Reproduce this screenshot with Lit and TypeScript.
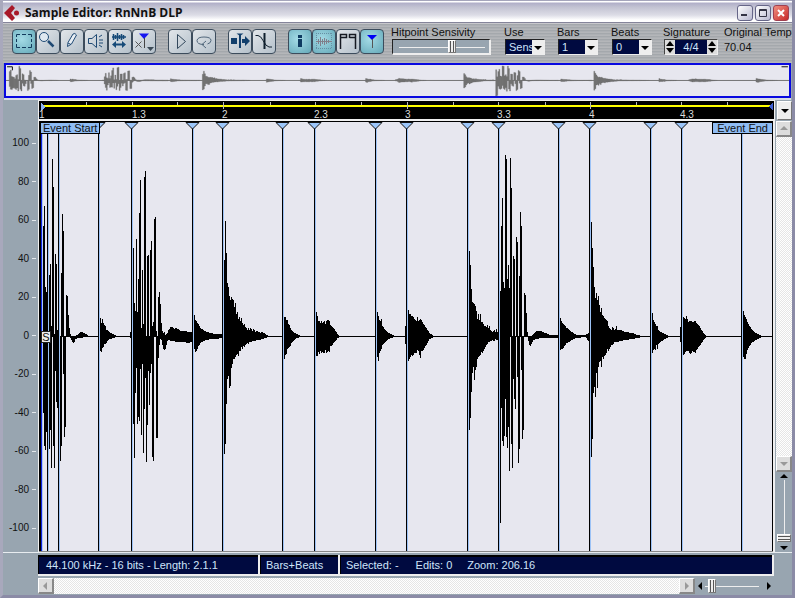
import { LitElement, html, svg, css } from "lit";
import { customElement } from "lit/decorators.js";

// Peaks of the sample: x, height above the zero line, depth below it.
// Each string is one hit; points further apart than one column are interpolated.
const HITS = [
  "43 110 76,44 130 109,45 49 113,46 44 95,47 40 90,48 20 100,49 61 112,50 72 93,51 10 131,52 177 0,53 149 109,54 2 131,55 82 34,56 72 65,57 6 71,58 0 40,59 0 0,60 0 124,61 63 109,62 122 0,63 105 37,64 0 100,65 0 90,66 41 0,67 40 0,68 21 0,69 8 0,70 2 1,71 0 3,72 0 5,73 0 6,74 0 5,75 0 2,77 1 1,80 4 1,84 3 0,88 0 0",
  "100 18 14,101 13 15,102 17 11,103 13 10,104 11 7,105 10 7,106 6 6,107 6 4,108 5 3,109 4 2,110 3 2,112 2 1,116 0 0",
  "130 4 1,131 4 1,133 88 87,134 33 121,135 25 56,136 97 31,137 24 87,138 57 80,139 123 84,140 156 32,141 8 98,142 66 27,143 12 116,144 159 72,145 165 41,146 0 125,147 80 88,148 81 34,149 0 68,150 86 36,151 95 27,152 10 120,153 14 124,154 117 0,155 119 0,156 5 101,157 0 101,158 39 21,159 44 8,160 32 2,161 13 3,162 5 8,163 3 12,164 4 13,165 1 12,166 2 8,167 3 4,168 6 3,169 7 3,170 9 4,172 9 4,174 7 4,176 8 5,180 5 5,184 5 5,188 4 6,191 4 5",
  "194 21 12,195 16 15,196 15 14,197 13 12,198 12 9,199 10 8,200 8 6,203 6 4,206 4 3,210 3 2,215 2 2,221 2 1",
  "224 76 117,225 115 107,226 83 67,227 53 42,228 49 39,229 40 51,230 36 49,231 39 31,232 37 27,233 36 22,234 29 22,235 33 20,236 22 18,237 24 17,238 17 19,239 19 14,240 15 14,241 18 10,242 13 12,243 11 9,244 12 10,245 9 8,246 8 7,247 6 6,248 8 7,249 6 5,250 8 5,252 5 4,253 7 4,255 4 4,256 5 3,260 3 3,261 4 2,265 2 1,268 0 0",
  "284 19 22,285 19 18,286 16 17,287 16 12,288 12 11,289 11 10,290 8 9,291 6 6,292 5 5,293 4 4,294 3 3,296 2 1,301 0 0",
  "316 24 19,317 20 19,318 15 15,319 15 17,320 13 14,321 15 16,322 13 15,323 14 16,324 15 16,325 12 13,326 15 16,328 16 14,329 15 15,330 11 9,332 9 8,333 8 6,335 5 4,337 2 1,339 0 0",
  "377 24 20,378 20 24,379 16 16,380 15 14,381 17 12,382 10 8,384 7 6,387 4 3,390 2 1,394 0 0",
  "405 10 7,406 10 7,408 26 24,409 22 22,410 22 20,411 20 18,412 20 19,414 17 16,416 15 16,417 19 13,418 15 14,420 17 21,421 16 14,423 12 13,425 9 9,427 6 6,429 3 2,433 0 0",
  "469 85 93,470 71 81,471 47 55,472 34 36,473 33 30,474 32 43,475 30 33,476 25 30,477 17 22,478 22 20,479 16 19,480 22 18,481 14 15,482 14 16,484 10 12,486 9 8,487 11 7,488 8 5,489 10 5,490 6 4,492 4 3,494 6 4,495 4 2,496 7 3,497 4 3",
  "499 134 192,500 45 186,501 110 71,502 138 104,503 54 109,504 48 99,505 181 62,506 177 100,507 57 111,508 71 90,509 48 134,510 178 0,511 148 107,512 0 131,513 80 42,514 77 62,515 0 72,516 99 0,517 94 40,518 0 126,519 60 112,520 124 0,521 110 33,522 0 102,523 0 93,524 43 0,525 41 0,526 23 0,527 4 0,528 0 4,529 0 8,530 0 9,531 0 7,533 2 3,536 5 2,540 5 1,545 3 1,550 1 1,557 1 1",
  "560 18 13,561 15 12,562 13 12,563 12 11,564 11 9,565 10 8,566 8 6,568 7 5,570 5 4,573 3 2,576 1 1,585 1 0,588 3 4",
  "591 114 120,592 88 102,593 69 56,594 49 50,595 38 60,596 43 36,597 36 51,598 40 30,599 31 25,600 24 24,601 28 30,602 21 20,603 20 22,604 18 19,606 16 16,607 15 12,608 10 14,609 8 12,611 6 8,612 9 8,614 6 5,615 7 5,616 10 5,617 6 5,620 6 4,625 4 3,632 3 2,636 1 1,642 0 0",
  "652 23 16,653 16 13,654 14 12,655 12 13,656 10 8,657 10 12,658 6 7,660 4 5,663 3 3,668 0 0",
  "680 9 5,683 19 18,685 17 15,686 20 14,688 14 14,690 15 17,692 14 14,695 15 16,696 13 13,698 11 10,700 8 8,703 3 3,706 0 0",
  "743 25 20,744 21 22,745 19 22,746 17 17,747 14 13,749 10 9,751 7 6,754 4 4,757 2 2,762 0 0",
];
const ZERO = 336;

function wavePath(): string {
  let d = "";
  for (const hit of HITS) {
    const pts = hit.split(",").map((p) => p.split(" ").map(Number));
    pts.forEach(([x, u, v], i) => {
      const [nx, nu, nv] = pts[i + 1] ?? [x + 1, u, v];
      for (let c = x; c < nx; c++) {
        const t = (c - x) / (nx - x);
        const up = Math.round(u + (nu - u) * t);
        const down = Math.round(v + (nv - v) * t);
        d += `M${c} ${ZERO - up}H${c + 1}V${ZERO + 1 + down}H${c}Z`;
      }
    });
  }
  return d;
}
const WAVE = wavePath();

const HITPOINTS = [47, 58, 98, 131, 192, 222, 282, 314, 375, 406, 467, 498, 558, 589, 650, 681, 741];
const TICKS = [86, 132, 177, 223, 270, 315, 361, 407, 453, 498, 545, 590, 636, 681, 727];
const BEATS: [number, string][] = [
  [39, "1"], [132, "1.3"], [222, "2"], [314, "2.3"], [405, "3"], [497, "3.3"], [589, "4"], [680, "4.3"],
];
const LEVELS = [100, 80, 60, 40, 20, 0, -20, -40, -60, -80, -100];

const ICONS = {
  select: svg`<path d="M4.500 8V5.500H8M10 5.500H14M16 5.500H19.500V8M19.500 10V13M19.500 15V18.500H16M14 18.500H10M8 18.500H4.500V15M4.500 13V10" fill="none" stroke="#123a5c"/>`,
  zoom: svg`<circle cx="8" cy="8" r="4.500" fill="#dfe8f0" stroke="#1f4a74"/><path d="M12 12L17.500 17.500" stroke="#1f4a74" stroke-width="2.500"/>`,
  draw: svg`<path d="M7.500 17.500L8 13.500L13 5Q15 3.500 16.500 6L11.500 15Z" fill="#e8eef4" stroke="#1f4a74"/><path d="M8 14L11 15.500" stroke="#1f4a74"/>`,
  play: svg`<path d="M4.500 9.500H8L12.500 5.500V18.500L8 14.500H4.500Z" fill="none" stroke="#1f4a74"/><path d="M15 8L18 6M15 11H19M15 14H19M15 16L18 18" stroke="#1f4a74"/>`,
  scrub: svg`<path d="M4 8H18M5.500 5V11M7.500 6V10M9.500 4V12M11.500 6V10M13.500 5V11M15.500 6V10" stroke="#164a78" stroke-width="1.500"/><path d="M4 15.500L8 12V14.500H14V12L18 15.500L14 19V16.500H8V19Z" fill="#164a78"/>`,
  hitpoint: svg`<path d="M7 4.500H17L12 10Z" fill="#1616f0"/><path d="M12.500 9V19" stroke="#444"/><path d="M3.500 12.500L9.500 18.500M9.500 12.500L3.500 18.500" stroke="#555"/><path d="M15 18H22L18.500 22Z" fill="#3c4a56"/>`,
  start: svg`<path d="M9.500 5.500L17.500 12.500L9.500 19.500Z" fill="none" stroke="#33485c"/>`,
  loop: svg`<path d="M12 15.500Q5 15.500 5 11.500Q5.500 8 12 8Q19 8 19 11.500Q19 14 15.500 15" fill="none" stroke="#51677b"/><path d="M14 12L10 15.500L14 19" fill="none" stroke="#51677b"/>`,
  autoscroll: svg`<path d="M3 9H9V15H3ZM11 5H13V19H11ZM14 10H17V7L22 12L17 17V14H14Z" fill="#123f6c"/><path d="M8.500 4.500H15.500L12 7Z" fill="#123f6c"/>`,
  zero: svg`<path d="M12.500 4V20" stroke="#10202e" stroke-width="2"/><path d="M3.500 6.500H6Q9 7 11 11.500Q14 17.500 17 18H20" fill="none" stroke="#10202e"/>`,
  info: svg`<path d="M10 6H14V9H10ZM10 10H14V18H10Z" fill="#0e3a60"/>`,
  audio: svg`<path d="M4 4.500H20M4 19.500H20M4.500 4V20M19.500 4V20" stroke="#6590a4" stroke-dasharray="1 1" fill="none"/><path d="M4 12.500H20M6.500 10V15M8.500 8V17M10.500 10V15M12.500 9V16M14.500 10V15M16.500 11V14" stroke="#80808c"/>`,
  event: svg`<path d="M4.500 20V5.500H10.500V8.500H5M13.500 9V5.500H19.500V20M13.500 8.500H19" fill="none" stroke="#161a22" stroke-width="1.500"/>`,
  hitmode: svg`<path d="M7 6H17L12 11Z" fill="#0000f4"/><path d="M12.500 10V19" stroke="#555"/>`,
};

@customElement("app-root")
export class SampleEditor extends LitElement {
  static styles = css`
    * { box-sizing: border-box; }
    :host {
      box-sizing: border-box;
      display: flex;
      flex-direction: column;
      height: 100vh;
      min-height: 360px;
      overflow: hidden;
      font: 11px/13px "Liberation Sans", Arial, sans-serif;
      color: #111;
      background: #98a5b0;
      border: solid #8b8ba6;
      border-width: 0 3px 3px 3px;
      border-left-color: #a8a8bc;
    }
    button, select, input { font: inherit; margin: 0; padding: 0; border-radius: 0; }
    svg { display: block; }

    .title {
      flex: none;
      display: flex;
      align-items: center;
      height: 23px;
      padding-right: 1px;
      border-bottom: 1px solid #85859a;
      background: linear-gradient(#a5a5bb 0 1px, #fff 1px 2px, #b0aec8 3px, #c2c2d2 7px, #dcdce6 15px, #fff 20px);
    }
    .title h1 {
      flex: 1;
      margin: 3px 0 0 2px;
      font: bold 12px/18px "Open Sans", "Noto Sans", sans-serif;
      white-space: nowrap;
    }
    .logo { margin-top: 1px; }
    .win {
      width: 16px;
      height: 16px;
      margin: 3px 2px 0 0;
      border: 1px solid #666688;
      border-radius: 3px;
      background: linear-gradient(135deg, #fff, #b8b8d0);
    }
    .win.close { background: linear-gradient(135deg, #f09080, #c82828); border-color: #a04050; }

    .tools {
      flex: none;
      display: flex;
      height: 40px;
      padding-left: 9px;
      overflow: hidden;
      background: repeating-linear-gradient(#a4a8ac 0 1px, #adb0b4 1px 2px, #b4b6b9 2px 3px);
      border-top: 1px solid #c8c8cc;
      white-space: nowrap;
    }
    .group { display: flex; margin: 5px 12px 0 0; height: 25px; }
    .tool {
      width: 24px;
      height: 25px;
      border: 1px solid #3c4c5c;
      border-radius: 4px;
      background: linear-gradient(135deg, #e2e6ea, #b4c0ca);
      overflow: hidden;
    }
    .tool svg { margin: -1px; }
    .tool.on { background: radial-gradient(circle at 40% 40%, #a4dbe6, #64a8b8); }
    .field { display: flex; flex-direction: column; margin-top: 2px; flex: none; }
    .field .control { height: 16px; }
    .f-sens { width: 113px; margin-left: -5px; }
    .f-use { width: 53px; }
    .f-bars { width: 54px; }
    .f-beats { width: 52px; }
    .f-sig { width: 61px; }
    .box {
      display: flex;
      width: 40px;
      border: 1px solid #222;
      border-right-color: #eee;
      border-bottom-color: #eee;
      background: #000a40;
      margin-left: 1px;
    }
    .box select {
      appearance: none;
      width: 26px;
      flex: none;
      border: 0;
      padding-left: 3px;
      background: transparent;
      color: #cfe4fa;
    }
    .box .drop { flex: 1; background: #eee; pointer-events: none; }
    .sig { display: flex; width: 54px; border: 1px solid #444; border-right-color: #eee; border-bottom-color: #eee; margin-left: 1px; }
    .sig input { width: 32px; border: 0; background: #000a40; color: #cfe4fa; text-align: center; }
    .spin { flex: 1; display: flex; flex-direction: column; background: #ddd; }
    .spin button { flex: 1; border: 0; background: none; height: 7px; }
    .tempo { padding-top: 2px; }

    .slider { appearance: none; background: none; outline: none; }
    .slider::-webkit-slider-thumb {
      appearance: none;
      width: 8px;
      height: 13px;
      border: 1px solid #777;
      border-left-color: #fff;
      border-top-color: #fff;
      background: linear-gradient(90deg, #e8e8e8 1px, #555 1px 2px, #eee 2px 4px, #555 4px 5px, #eee 5px);
    }
    .slider.sens {
      width: 99px;
      margin-left: 1px;
      border: 1px solid #222;
      border-right: 2px solid #eee;
      border-bottom: 2px solid #eee;
      background: linear-gradient(#eee, #eee) 6px 7px / 86px 1px no-repeat #98a5b0;
    }

    .overview {
      flex: none;
      height: 35px;
      border: 2px solid #0808e0;
      margin: 0 1px;
      background: #e7e7ef;
      box-shadow: 0 2px #d8dce2;
    }
    .overview svg { width: 100%; height: 31px; }

    .main {
      flex: 1;
      min-height: 0;
      display: grid;
      grid-template: 21px minmax(0, 1fr) / 35px minmax(0, 1fr) 17px;
      margin-top: 2px;
    }
    .ruler {
      position: relative;
      grid-column: 2;
      border: solid #f0f0f0;
      border-width: 1px 1px 2px 1px;
      background: #000;
    }
    .ruler svg { width: 100%; height: 18px; }
    .beat { position: absolute; top: 8px; font-size: 10px; line-height: 11px; color: #ddd; }
    .menu { margin: 1px 0 1px 2px; border: 1px solid #777; border-top-color: #fff; border-left-color: #fff; background: #eee; }
    .axis {
      grid-column: 1;
      display: flex;
      flex-direction: column;
      justify-content: space-between;
      align-items: flex-end;
      padding: 16px 2px 18px 0;
      font-size: 10px;
      line-height: 12px;
    }
    .level { display: flex; align-items: center; gap: 3px; }
    .level::after { content: ""; width: 4px; height: 1px; background: #e4e8ec; }
    .wave {
      position: relative;
      min-height: 0;
      border: solid #f0f0f0;
      border-width: 0 2px 0 1px;
    }
    .wave svg { width: 100%; height: 100%; background: #e7e7ef; }
    .tag {
      position: absolute;
      top: 1px;
      height: 12px;
      padding: 0 2px;
      border: 1px solid #000;
      background: #8fbcf4;
      line-height: 10px;
    }
    .tag.start { left: 1px; }
    .tag.end { right: 0; padding: 0 4px; }
    .snap {
      position: absolute;
      left: 2px;
      top: calc(50% - 6px);
      width: 10px;
      height: 12px;
      border: 1px solid #222;
      background: #eee;
      line-height: 10px;
      text-align: center;
    }
    .side { display: flex; flex-direction: column; padding-left: 1px; }
    .bar {
      flex: 1;
      display: flex;
      justify-content: space-between;
      background: repeating-conic-gradient(#fff 0 25%, #e6e6e6 0 50%) 0 0 / 2px 2px;
    }
    .bar.v { flex-direction: column; }
    .arrow {
      flex: none;
      width: 16px;
      height: 16px;
      border: 1px solid #fff;
      border-right: 2px solid #888;
      border-bottom: 2px solid #888;
      background: #ddd;
    }
    .arrow svg { margin: -1px; }
    .zoomv { flex: none; display: flex; flex-direction: column; align-items: center; height: 80px; }
    .zoomv .slider {
      writing-mode: vertical-lr;
      width: 14px;
      height: 64px;
      background: linear-gradient(#eee, #eee) 7px 0 / 1px 54px no-repeat;
    }
    .zoomv .slider::-webkit-slider-thumb {
      width: 14px;
      height: 8px;
      background: linear-gradient(#e8e8e8 1px, #555 1px 2px, #eee 2px 4px, #555 4px 5px, #eee 5px);
    }
    .nudge { border: 0; background: none; width: 10px; height: 8px; }

    .status {
      flex: none;
      display: flex;
      height: 25px;
      padding: 2px 18px 1px 35px;
      border-top: 1px solid #e8ecf0;
      color: #cfe4fa;
      white-space: nowrap;
    }
    .cell {
      display: flex;
      gap: 17px;
      padding-left: 6px;
      border: solid #eee;
      border-width: 0 2px 2px 0;
      background: #000a40;
      box-shadow: inset 1px 2px #000;
      line-height: 21px;
    }
    .cell:first-child { width: 222px; padding-left: 8px; }
    .cell:nth-child(2) { width: 80px; }
    .cell:last-child { flex: 1; gap: 15px; }
    .cell:last-child span:first-child { margin-right: 2px; }
    .foot { flex: none; display: flex; height: 18px; padding: 1px 18px 1px 35px; }
    .zoomh { flex: none; width: 79px; display: flex; align-items: center; }
    .zoomh .nudge { width: 10px; height: 10px; }
    .zoomh .slider { width: 58px; height: 16px; background: linear-gradient(#eee, #eee) 0 8px / 54px 1px no-repeat; }
    .zoomh .slider::-webkit-slider-thumb { height: 14px; }
  `;

  private icon(name: keyof typeof ICONS, label: string, on = false) {
    return html`<button class="tool ${on ? "on" : ""}" aria-label=${label} aria-pressed=${on}>
      <svg width="24" height="25" viewBox="0 0 24 25">${ICONS[name]}</svg>
    </button>`;
  }

  private tri(d: string, w: number, h: number, color = "#000") {
    return html`<svg width=${w} height=${h} viewBox="0 0 ${w} ${h}"><path d=${d} fill=${color}></path></svg>`;
  }

  private drop(label: string, value: string, cls: string) {
    return html`<label class="field ${cls}">
      <span>${label}</span>
      <span class="control box">
        <select><option>${value}</option></select>
        <span class="drop">${this.tri("M2 6H10L6 10Z", 12, 14)}</span>
      </span>
    </label>`;
  }

  private spin(name: string) {
    return html`<span class="spin">
      <button aria-label="${name} up">${this.tri("M1 6L5 1L9 6Z", 10, 7)}</button>
      <button aria-label="${name} down">${this.tri("M1 1H9L5 6Z", 10, 7)}</button>
    </span>`;
  }

  render() {
    return html`
      <header class="title">
        <svg class="logo" width="20" height="20" viewBox="0 0 20 20">
          <path d="M9 3L12 6L8 11L12 16L9 19L1 11Z" fill="#a81828"></path>
          <circle cx="13.500" cy="11" r="2.500" fill="#a81828"></circle>
        </svg>
        <h1>Sample Editor: RnNnB DLP</h1>
        <button class="win" aria-label="Minimize">${this.tri("M3 8H9V10H3Z", 14, 14, "#334")}</button>
        <button class="win" aria-label="Maximize">
          <svg width="14" height="14" viewBox="0 0 14 14"><path d="M3.500 3.500H10.500V10.500H3.500ZM3 4.500H11" fill="none" stroke="#334"></path></svg>
        </button>
        <button class="win close" aria-label="Close">
          <svg width="14" height="14" viewBox="0 0 14 14"><path d="M4 4L10 10M10 4L4 10" stroke="#fff" stroke-width="2"></path></svg>
        </button>
      </header>

      <nav class="tools">
        <div class="group">
          ${this.icon("select", "Range selection", true)} ${this.icon("zoom", "Zoom")}
          ${this.icon("draw", "Draw")} ${this.icon("play", "Play")} ${this.icon("scrub", "Scrub")}
          ${this.icon("hitpoint", "Hitpoint edit")}
        </div>
        <div class="group">${this.icon("start", "Audition")} ${this.icon("loop", "Loop")}</div>
        <div class="group">${this.icon("autoscroll", "Autoscroll")} ${this.icon("zero", "Snap to zero crossing")}</div>
        <div class="group">
          ${this.icon("info", "Show info", true)} ${this.icon("audio", "Show audio", true)}
          ${this.icon("event", "Show event")} ${this.icon("hitmode", "Hitpoint mode", true)}
        </div>
        <label class="field f-sens">
          <span>Hitpoint Sensivity</span>
          <input class="control slider sens" type="range" min="0" max="100" value="63" />
        </label>
        ${this.drop("Use", "Sens", "f-use")} ${this.drop("Bars", "1", "f-bars")}
        ${this.drop("Beats", "0", "f-beats")}
        <div class="field f-sig">
          <label for="sig">Signature</label>
          <span class="control sig">
            ${this.spin("Numerator")}<input id="sig" type="text" value="4/4" />${this.spin("Denominator")}
          </span>
        </div>
        <div class="field"><span>Original Tempo</span><span class="tempo">70.04</span></div>
      </nav>

      <section class="overview" aria-label="Overview">
        <svg viewBox="40 144 734 386" preserveAspectRatio="none">
          <path d="M40 336.500H774" stroke="#737373" vector-effect="non-scaling-stroke"></path>
          <path d=${WAVE} fill="#737373" stroke="#737373" stroke-width="0.500"></path>
          <path d="M41 166H46V210M767 166H773" stroke="#111" fill="none" vector-effect="non-scaling-stroke"></path>
        </svg>
      </section>

      <main class="main">
        <div class="ruler">
          <svg viewBox="39 101 735 18" preserveAspectRatio="none" shape-rendering="crispEdges">
            <path d="M41 105H772V107H41Z" fill="#ff0"></path>
            ${TICKS.map((x, i) => svg`<path d="M${x + 0.5} 102V${i % 4 === 3 ? 109 : 105}" stroke="#bbb"/>`)}
            <path d="M41 102L45 107L41 111Z" fill="#8fb4f4"></path>
            <path d="M773 102L769 107L773 111Z" fill="#4060d0"></path>
          </svg>
          ${BEATS.map(([x, t]) => html`<span class="beat" style="left:${((x - 39) / 735) * 100}%">${t}</span>`)}
        </div>
        <button class="menu" aria-label="Ruler format">${this.tri("M3 6H11L7 10Z", 14, 16)}</button>

        <div class="axis">${LEVELS.map((l) => html`<span class="level">${l}</span>`)}</div>
        <div class="wave">
          <svg viewBox="39 121 734 431" preserveAspectRatio="none" shape-rendering="crispEdges">
            <path d="M39 121H774V122H39ZM39 121H41V552H39Z"></path>
            <path d="M41 ${ZERO}H774V${ZERO + 1}H41Z"></path>
            <path d=${WAVE}></path>
            <path d="M41 122H42V552H41Z" fill="#0b24e0"></path>
            <path d="M42 122H43V552H42Z" fill="#a9c8fa"></path>
            ${HITPOINTS.map((x) => svg`
              <path d="M${x} 122H${x + 1}V552H${x}Z"/>
              <path d="M${x + 1} 122H${x + 2}V552H${x + 1}Z" fill="#9cc2f6"/>
              ${x > 90 && x < 740 ? svg`<path d="M${x - 6} 122.500H${x + 7}L${x + 0.5} 129Z" fill="#9cc6fa" stroke="#111" shape-rendering="auto"/>` : ""}`)}
            <path d="M772 122H773V552H772Z"></path>
            <path d="M39 551H773V552H39Z" fill="#888"></path>
          </svg>
          <span class="tag start">Event Start</span>
          <span class="tag end">Event End</span>
          <span class="snap">S</span>
        </div>
        <div class="side">
          <div class="bar v">
            <button class="arrow" aria-label="Scroll up">${this.tri("M4 9L8 5L12 9Z", 16, 16, "#999")}</button>
            <button class="arrow" aria-label="Scroll down">${this.tri("M4 6H12L8 10Z", 16, 16, "#999")}</button>
          </div>
          <div class="zoomv">
            <button class="nudge" aria-label="Zoom out vertically">${this.tri("M1 6L5 2L9 6Z", 10, 8)}</button>
            <input class="slider" type="range" aria-label="Vertical zoom" min="0" max="100" value="96" />
            <button class="nudge" aria-label="Zoom in vertically">${this.tri("M1 2H9L5 6Z", 10, 8)}</button>
          </div>
        </div>
      </main>

      <footer class="status">
        <div class="cell">44.100 kHz - 16 bits - Length: 2.1.1</div>
        <div class="cell">Bars+Beats</div>
        <div class="cell"><span>Selected: -</span><span>Edits: 0</span><span>Zoom: 206.16</span></div>
      </footer>
      <div class="foot">
        <div class="bar">
          <button class="arrow" aria-label="Scroll left">${this.tri("M9 4V12L5 8Z", 16, 16, "#999")}</button>
          <button class="arrow" aria-label="Scroll right">${this.tri("M6 4V12L10 8Z", 16, 16, "#999")}</button>
        </div>
        <div class="zoomh">
          <button class="nudge" aria-label="Zoom out">${this.tri("M7 1V9L3 5Z", 10, 10)}</button>
          <input class="slider" type="range" aria-label="Horizontal zoom" min="0" max="100" value="6" />
          <button class="nudge" aria-label="Zoom in">${this.tri("M4 1V9L8 5Z", 10, 10)}</button>
        </div>
      </div>
    `;
  }
}
